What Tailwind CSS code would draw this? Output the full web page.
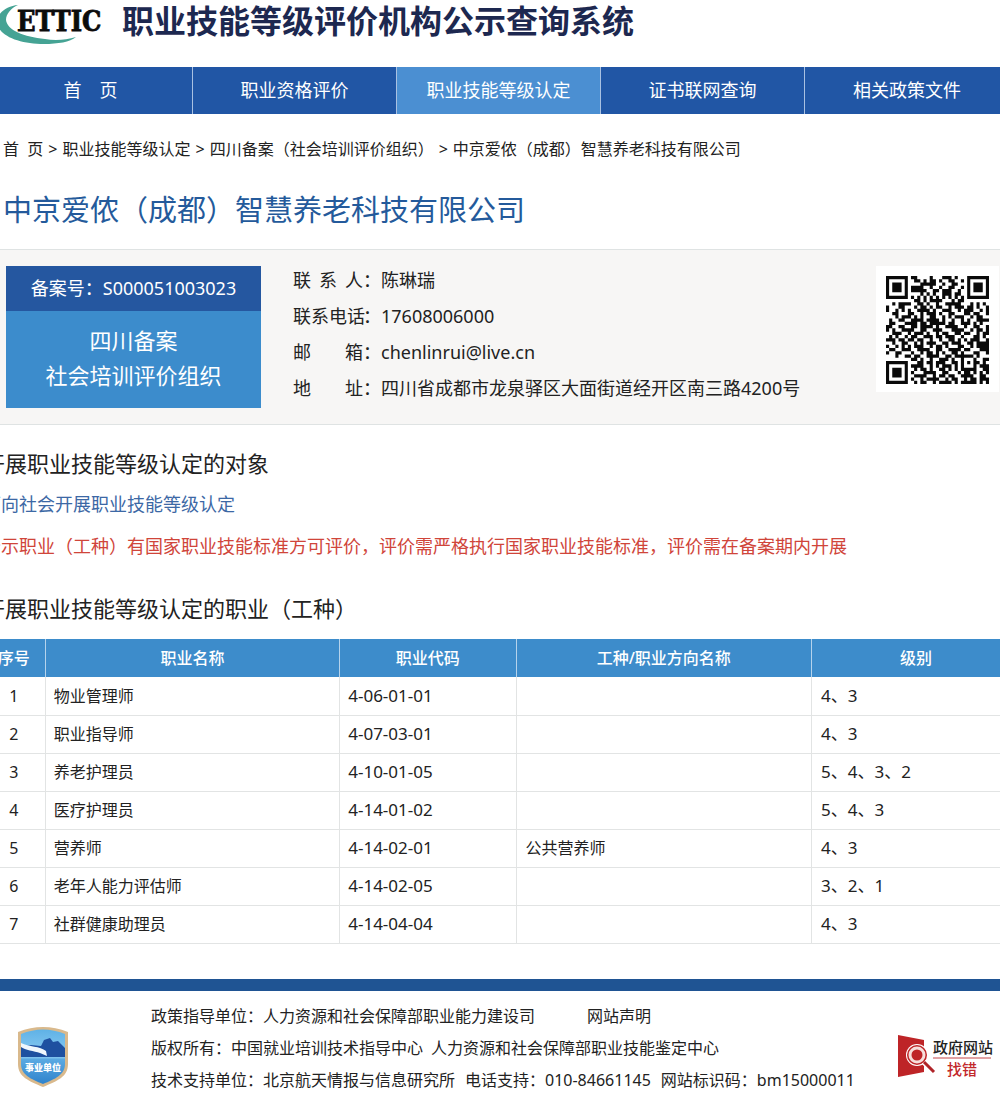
<!DOCTYPE html>
<html lang="zh-CN">
<head>
    <meta charset="UTF-8">
    <meta name="viewport" content="width=device-width, initial-scale=1.0">
    <title>职业技能等级评价机构公示查询系统</title>
    <script src="https://cdn.jsdelivr.net/npm/@tailwindcss/browser@4"></script>
    <style>
        body {
            font-family: 'Noto Sans', 'Noto Sans CJK SC', sans-serif;
        }
    </style>
</head>
<body class="bg-white text-[#222] overflow-x-hidden">

    <!-- 页头 -->
    <header class="flex items-start gap-5 h-[67px]">
        <svg class="w-[102px] h-12 shrink-0" viewBox="0 0 102 48" role="img" aria-label="ETTIC">
            <path d="M18 5C7 6-3 13-3 22C-2 36 20 44 44 44C58 44 70 42 76 37C66 40 55 41 45 39C24 37 7 30 6 20C6 14 11 8 18 5Z" fill="#45a394"/>
            <text x="17" y="31" font-family="'DejaVu Serif Condensed', 'DejaVu Serif', serif" font-weight="700" font-size="27" fill="#0c0c0c" stroke="#0c0c0c" stroke-width="0.8">ETTIC</text>
        </svg>
        <p class="text-[32px] leading-[42px] font-bold text-[#1d2850] whitespace-nowrap">职业技能等级评价机构公示查询系统</p>
    </header>

    <!-- 主导航 -->
    <div class="overflow-hidden">
        <nav class="grid grid-cols-5 -ml-[11px] -mr-[9px] bg-[#2156a5] text-white text-lg leading-[47px] text-center whitespace-nowrap">
            <a href="#" class="border-r border-[#a9c1e2]">首　页</a>
            <a href="#" class="border-r border-[#a9c1e2]">职业资格评价</a>
            <a href="#" class="border-r border-[#a9c1e2] bg-[#4b8fd2]">职业技能等级认定</a>
            <a href="#" class="border-r border-[#a9c1e2]">证书联网查询</a>
            <a href="#">相关政策文件</a>
        </nav>
    </div>

    <main class="overflow-hidden">
        <!-- 面包屑 -->
        <nav class="flex gap-[5px] mt-[23px] pl-[3px] text-base leading-6 whitespace-nowrap">
            <a href="#" class="whitespace-pre">首  页</a>
            <span>&gt;</span>
            <a href="#">职业技能等级认定</a>
            <span>&gt;</span>
            <a href="#">四川备案（社会培训评价组织）</a>
            <span>&gt;</span>
            <span>中京爱侬（成都）智慧养老科技有限公司</span>
        </nav>

        <h1 class="mt-[29px] pl-[3px] text-[29px] leading-10 text-[#245a9b]">中京爱侬（成都）智慧养老科技有限公司</h1>

        <!-- 机构信息 -->
        <section class="flex items-start mt-[19px] pt-3 pb-4 pl-[6px] bg-[#f7f6f5] border-y border-[#dfe3e3]">
            <div class="w-[255px] shrink-0 mt-1 text-center text-white">
                <p class="bg-[#2557a0] text-lg leading-[45px]">备案号：S000051003023</p>
                <p class="bg-[#3c8ccc] pt-3 pb-[15px] text-[22px] leading-[35px]">四川备案<br>社会培训评价组织</p>
            </div>
            <dl class="grow ml-8 text-lg leading-9 whitespace-nowrap">
                <div class="flex"><dt class="flex"><span class="w-[70px] flex justify-between"><span>联</span><span>系</span><span>人</span></span>：</dt><dd>陈琳瑞</dd></div>
                <div class="flex"><dt class="flex"><span class="w-[70px] flex">联系电话</span>：</dt><dd>17608006000</dd></div>
                <div class="flex"><dt class="flex"><span class="w-[70px] flex justify-between"><span>邮</span><span>箱</span></span>：</dt><dd>chenlinrui@live.cn</dd></div>
                <div class="flex"><dt class="flex"><span class="w-[70px] flex justify-between"><span>地</span><span>址</span></span>：</dt><dd>四川省成都市龙泉驿区大面街道经开区南三路4200号</dd></div>
            </dl>
            <div class="shrink-0 mt-1 mr-px px-[10px] pt-[10px] pb-2 bg-white">
                <svg id="qr" class="w-[103px] h-[108px]" viewBox="0 0 33 33" preserveAspectRatio="none" role="img" aria-label="二维码"></svg>
            </div>
        </section>

        <!-- 认定对象 -->
        <section class="-ml-[17px] mt-5 whitespace-nowrap">
            <h2 class="text-[22px] leading-9">开展职业技能等级认定的对象</h2>
            <p class="mt-[9px] text-lg leading-7 text-[#3c68a5]">面向社会开展职业技能等级认定</p>
            <p class="mt-[14px] text-lg leading-7 text-[#d0453a]">公示职业（工种）有国家职业技能标准方可评价，评价需严格执行国家职业技能标准，评价需在备案期内开展</p>
        </section>

        <!-- 认定职业 -->
        <section class="-ml-[17px] -mr-5 mt-[30px]">
            <h2 class="text-[22px] leading-9">开展职业技能等级认定的职业（工种）</h2>
            <table class="w-full mt-[13px] table-fixed border-collapse text-base">
                <colgroup>
                    <col class="w-[6%]">
                    <col class="w-[28.4%]">
                    <col class="w-[17%]">
                    <col class="w-[28.5%]">
                    <col>
                </colgroup>
                <thead>
                    <tr class="h-[38px] bg-[#3d8ccb] text-white">
                        <th class="font-medium border-r border-[#b5d3ec]">序号</th>
                        <th class="font-medium border-r border-[#b5d3ec]">职业名称</th>
                        <th class="font-medium border-r border-[#b5d3ec]">职业代码</th>
                        <th class="font-medium border-r border-[#b5d3ec]">工种/职业方向名称</th>
                        <th class="font-medium">级别</th>
                    </tr>
                </thead>
                <tbody id="jobs"></tbody>
            </table>
        </section>
    </main>

    <!-- 页脚 -->
    <footer class="mt-[35px] border-t-[12px] border-[#1f5493] flex items-start pt-[9px] text-base leading-8 whitespace-nowrap">
        <svg class="w-[52px] h-[62px] ml-[17px] mt-[26px] shrink-0" viewBox="0 0 52 62" role="img" aria-label="事业单位">
            <defs>
                <linearGradient id="sky" x1="0" y1="0" x2="0" y2="1">
                    <stop offset="0" stop-color="#5fb2e6"/>
                    <stop offset="0.5" stop-color="#8ccbf2"/>
                    <stop offset="0.55" stop-color="#5aa9e2"/>
                    <stop offset="1" stop-color="#2f83cc"/>
                </linearGradient>
            </defs>
            <path d="M1 6Q26-4 51 6V38C51 51 40 55 26 61C12 55 1 51 1 38Z" fill="#d9b98c"/>
            <path d="M4 8Q26-1 48 8V38C48 49 38 53 26 58C14 53 4 49 4 38Z" fill="url(#sky)"/>
            <path d="M4 21L14 19L24 20L27 14L33 12L36 16L41 15L48 22V31H4Z" fill="#1e50a0"/>
            <path d="M4 17C12 21 23 20 29 25L30 30L23 27C17 25 8 24 4 21Z" fill="#f0f7fd"/>
            <text x="26" y="45" text-anchor="middle" font-size="9" font-weight="900" fill="#fff">事业单位</text>
        </svg>
        <div class="ml-[82px] grow">
            <p class="flex gap-[52px]"><span>政策指导单位：人力资源和社会保障部职业能力建设司</span><a href="#">网站声明</a></p>
            <p class="flex gap-2"><span>版权所有：中国就业培训技术指导中心</span><span>人力资源和社会保障部职业技能鉴定中心</span></p>
            <p class="flex gap-[10px]"><span>技术支持单位：北京航天情报与信息研究所</span><span>电话支持：010-84661145</span><span>网站标识码：bm15000011</span></p>
        </div>
        <a href="#" class="shrink-0 mt-[34px] mr-[6px]">
            <svg class="w-[97px] h-[46px]" viewBox="0 0 97 46" role="img" aria-label="政府网站找错">
                <path d="M1 1L27 6V38L1 43Z" fill="#be2427"/>
                <circle cx="20" cy="21" r="11" fill="#fff"/>
                <circle cx="20" cy="21" r="10" fill="#be2427"/>
                <circle cx="20" cy="21" r="7" fill="#be2427" stroke="#f6dedb" stroke-width="3"/>
                <path d="M27 28L37 38" stroke="#fff" stroke-width="6"/>
                <path d="M27 28L37 38" stroke="#b02428" stroke-width="3"/>
                <text x="36" y="19" font-size="15" font-weight="500" fill="#222">政府网站</text>
                <path d="M36 24H94" stroke="#c4474a" stroke-width="1"/>
                <text x="50" y="41" font-size="15" font-weight="500" fill="#c2282b">找错</text>
            </svg>
        </a>
    </footer>

    <script>
        // 职业（工种）列表
        const jobs = [
            { name: '物业管理师', code: '4-06-01-01', direction: '', level: '4、3' },
            { name: '职业指导师', code: '4-07-03-01', direction: '', level: '4、3' },
            { name: '养老护理员', code: '4-10-01-05', direction: '', level: '5、4、3、2' },
            { name: '医疗护理员', code: '4-14-01-02', direction: '', level: '5、4、3' },
            { name: '营养师', code: '4-14-02-01', direction: '公共营养师', level: '4、3' },
            { name: '老年人能力评估师', code: '4-14-02-05', direction: '', level: '3、2、1' },
            { name: '社群健康助理员', code: '4-14-04-04', direction: '', level: '4、3' },
        ];

        document.getElementById('jobs').innerHTML = jobs.map((job, i) => `
            <tr class="h-[38px] border-b border-[#e2e4e4]">
                <td class="text-center border-r border-[#e2e4e4]">${i + 1}</td>
                <td class="pl-2 border-r border-[#e2e4e4]">${job.name}</td>
                <td class="pl-2 border-r border-[#e2e4e4] text-[17px]">${job.code}</td>
                <td class="pl-[9px] border-r border-[#e2e4e4]">${job.direction}</td>
                <td class="pl-[9px] text-[17px]">${job.level}</td>
            </tr>
        `).join('');

        // 二维码点阵，# 为黑色模块
        const qrRows = [
            '#######.##....#...###.#...#######',
            '#.....#..##.#.##.#..##..#.#.....#',
            '#.###.#....#####..#..##...#.###.#',
            '#.###.#.####..#..#..##..#.#.###.#',
            '#.###.#.#####..##.###..#..#.###.#',
            '#.....#....#.#.#..###.##..#.....#',
            '#######.#.#.#.#.#.#.#.#.#.#######',
            '.........##.#.####...#.##........',
            '..#.####..##.#..#..#####...#.#.#.',
            '#...##...#.##.#.##..#.###.##.#..#',
            '#..#.#.#..####.#..###..#.###..#.#',
            '..##...##..#.###.#..##...##.##..#',
            '...#.###.#.#..##..#.#.###..#.##..',
            '.#..##..####.####.#..#..#.#..####',
            '.##...####.##.#####.##..###.#.#..',
            '##..##..##.####.#..####..#..##..#',
            '#.#..####..##..###...####..#.##.#',
            '..###..#.###.#..#.##..##.##..#.##',
            '.#.#..#.##..###.##.###..#...##.#.',
            '###.##.##.##..#..#..##.#.#.###..#',
            '..#..##..#.#.###..##.###..##.####',
            '#..#.#.#.###..#.##.#...##..#.####',
            '.##..###..####..##..####.##...###',
            '#..##...#..#.##.#.#..##.#...##..#',
            '...#..##.##..####..##.######.#...',
            '........##.#..#..###.#..#...#..##',
            '#######...##.##.###..##.#.#.##.#.',
            '#.....#.####..#.#.###.#.#...#.###',
            '#.###.#..#.##.#..##.#.#.#####..##',
            '#.###.#.#...####..##...#.##.#.#.#',
            '#.###.#..####..#.##.##..####..##.',
            '#.....#.#..#.####..#.##..#.##.###',
            '#######..#.##..#.####.#.#####.#.#',
        ];
        let d = '';
        qrRows.forEach((row, y) => {
            for (let x = 0; x < row.length; x++) {
                if (row[x] === '#') d += `M${x} ${y}h1v1h-1z`;
            }
        });
        document.getElementById('qr').innerHTML = `<path d="${d}" fill="#0a0a0a"/>`;
    </script>
</body>
</html>
